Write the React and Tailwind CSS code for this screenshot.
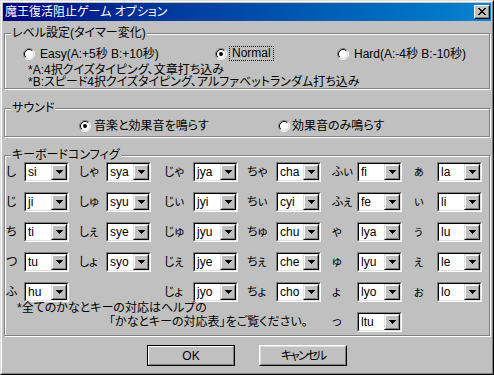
import React from "react";

const ROWS = [
  [["し", "si"], ["しゃ", "sya"], ["じゃ", "jya"], ["ちゃ", "cha"], ["ふぃ", "fi"], ["ぁ", "la"]],
  [["じ", "ji"], ["しゅ", "syu"], ["じぃ", "jyi"], ["ちぃ", "cyi"], ["ふぇ", "fe"], ["ぃ", "li"]],
  [["ち", "ti"], ["しぇ", "sye"], ["じゅ", "jyu"], ["ちゅ", "chu"], ["ゃ", "lya"], ["ぅ", "lu"]],
  [["つ", "tu"], ["しょ", "syo"], ["じぇ", "jye"], ["ちぇ", "che"], ["ゅ", "lyu"], ["ぇ", "le"]],
  [["ふ", "hu"], null, ["じょ", "jyo"], ["ちょ", "cho"], ["ょ", "lyo"], ["ぉ", "lo"]],
];
const CELL_W = ["w-[73px]", "w-[85px]", "w-[83px]", "w-[85px]", "w-[82px]", "w-[72px]"];
const LABEL_W = ["w-[18px]", "w-[27px]", "w-[29px]", "w-[29px]", "w-[25px]", "w-[23px]"];

function Radio({ checked }) {
  return (
    <svg width="12" height="12" viewBox="0 0 12 12" className="shrink-0 block">
      <circle cx="6" cy="6" r="4.5" fill="#fff" />
      <path d="M2.11 9.89A5.5 5.5 0 0 1 9.89 2.11" stroke="#808080" fill="none" />
      <path d="M9.89 2.11A5.5 5.5 0 0 1 2.11 9.89" stroke="#fff" fill="none" />
      <path d="M2.82 9.18A4.5 4.5 0 0 1 9.18 2.82" stroke="#000" fill="none" />
      <path d="M9.18 2.82A4.5 4.5 0 0 1 2.82 9.18" stroke="#dfdfdf" fill="none" />
      {checked && <circle cx="6" cy="6" r="2" fill="#000" />}
    </svg>
  );
}

function Arrow() {
  return (
    <svg width="7" height="4" viewBox="0 0 7 4" className="block">
      <rect x="0" y="0" width="7" height="1" fill="#000" />
      <rect x="1" y="1" width="5" height="1" fill="#000" />
      <rect x="2" y="2" width="3" height="1" fill="#000" />
      <rect x="3" y="3" width="1" height="1" fill="#000" />
    </svg>
  );
}

function Combo({ value }) {
  return (
    <div className="w-[45px] h-[20px] shrink-0 flex border border-t-[#808080] border-l-[#808080] border-b-white border-r-white">
      <div className="flex-1 flex border border-t-black border-l-black border-b-[#dfdfdf] border-r-[#dfdfdf] bg-white">
        <div className="flex-1 pl-[2px] leading-[16px] text-[12px] text-black">{value}</div>
        <div className="w-[16px] h-[16px] flex border border-t-[#dfdfdf] border-l-[#dfdfdf] border-b-black border-r-black">
          <div className="flex-1 flex items-center justify-center bg-[#c0c0c0] border border-t-white border-l-white border-b-[#808080] border-r-[#808080]">
            <Arrow />
          </div>
        </div>
      </div>
    </div>
  );
}

function Cell({ item, i }) {
  return (
    <div className={`${CELL_W[i]} h-[20px] flex items-center shrink-0`}>
      {item && (
        <>
          <div className={`${LABEL_W[i]} shrink-0 leading-[14px]`}>{item[0]}</div>
          <Combo value={item[1]} />
        </>
      )}
    </div>
  );
}

function Group({ title, className, children }) {
  return (
    <div
      className={`relative ml-[1px] w-[486px] border border-[#808080] shadow-[inset_1px_1px_0_#fff,1px_1px_0_#fff] ${className}`}
    >
      <span className="absolute left-[6px] top-[-7px] px-[1px] bg-[#c0c0c0] leading-[12px] whitespace-nowrap">
        {title}
      </span>
      {children}
    </div>
  );
}

function CloseX() {
  const r = (x, y, w) => <rect key={`${x}-${y}`} x={x} y={y} width={w} height="1" fill="#000" />;
  return (
    <svg width="8" height="7" viewBox="0 0 8 7" className="block">
      {r(0, 0, 2)}{r(6, 0, 2)}
      {r(1, 1, 2)}{r(5, 1, 2)}
      {r(2, 2, 4)}
      {r(3, 3, 2)}
      {r(2, 4, 4)}
      {r(1, 5, 2)}{r(5, 5, 2)}
      {r(0, 6, 2)}{r(6, 6, 2)}
    </svg>
  );
}

export default function App() {
  return (
    <div className="w-[494px] h-[375px] bg-[#c0c0c0] border border-t-[#dfdfdf] border-l-[#dfdfdf] border-b-black border-r-black font-['Liberation_Sans','Noto_Sans_CJK_JP',sans-serif] [font-feature-settings:'palt'] text-[12px] text-black">
      <div className="w-full h-full border border-t-white border-l-white border-b-[#808080] border-r-[#808080] p-[1px] flex flex-col">
        {/* title bar */}
        <div className="h-[18px] shrink-0 flex items-center justify-between pl-[2px] pr-[1px] bg-gradient-to-r from-[#000080] to-[#1084d0]">
          <span className="text-white leading-[14px] whitespace-nowrap">魔王復活阻止ゲーム オプション</span>
          <div className="w-[16px] h-[14px] flex border border-t-white border-l-white border-b-black border-r-black bg-[#c0c0c0]">
            <div className="flex-1 flex items-center justify-center border-b border-r border-b-[#808080] border-r-[#808080]">
              <CloseX />
            </div>
          </div>
        </div>

        {/* level */}
        <Group title="レベル設定(タイマー変化)" className="mt-[12px] h-[56px]">
          <div className="mt-[12px] h-[14px] pl-[18px] grid grid-cols-[192px_122px_1fr] items-center">
            <div className="flex items-center">
              <Radio />
              <span className="ml-[5px] leading-[14px] whitespace-nowrap">Easy(A:+5秒 B:+10秒)</span>
            </div>
            <div className="flex items-center">
              <Radio checked />
              <span className="ml-[2px] px-[2px] border border-dotted border-black leading-[13px] whitespace-nowrap">Normal</span>
            </div>
            <div className="flex items-center">
              <Radio />
              <span className="ml-[5px] leading-[14px] whitespace-nowrap">Hard(A:-4秒 B:-10秒)</span>
            </div>
          </div>
          <div className="mt-[4px] pl-[23px] leading-[12px] whitespace-nowrap">
            <div>*A:4択クイズタイピング、文章打ち込み</div>
            <div>*B:スピード4択クイズタイピング、アルファベットランダム打ち込み</div>
          </div>
        </Group>

        {/* sound */}
        <Group title="サウンド" className="mt-[19px] h-[29px]">
          <div className="mt-[10px] h-[14px] pl-[74px] grid grid-cols-[199px_1fr] items-center">
            <div className="flex items-center">
              <Radio checked />
              <span className="ml-[3px] leading-[14px] whitespace-nowrap">音楽と効果音を鳴らす</span>
            </div>
            <div className="flex items-center">
              <Radio />
              <span className="ml-[2px] leading-[14px] whitespace-nowrap">効果音のみ鳴らす</span>
            </div>
          </div>
        </Group>

        {/* keyboard */}
        <Group title="キーボードコンフィグ" className="mt-[18px] h-[181px]">
          <div className="pt-[6px] pl-[1px] flex flex-col gap-[10px]">
            {ROWS.map((row, r) => (
              <div key={r} className="flex">
                {row.map((item, i) => (
                  <Cell key={i} item={item} i={i} />
                ))}
              </div>
            ))}
          </div>
          <div className="pl-[1px] flex">
            <div className="w-[326px] shrink-0 whitespace-nowrap leading-[12px]">
              <div className="pl-[11px]">*全てのかなとキーの対応はヘルプの</div>
              <div className="mt-[2px] pl-[103px]">「かなとキーの対応表」をご覧ください。</div>
            </div>
            <div className="mt-[10px]">
              <Cell item={["っ", "ltu"]} i={4} />
            </div>
          </div>
        </Group>

        {/* buttons */}
        <div className="mt-[9px] flex justify-center gap-[24px]">
          <div className="w-[88px] h-[21px] flex border border-black">
            <div className="flex-1 flex items-center justify-center border border-t-white border-l-white border-b-[#808080] border-r-[#808080] leading-[14px]">
              OK
            </div>
          </div>
          <div className="w-[88px] h-[21px] flex border border-t-white border-l-white border-b-black border-r-black">
            <div className="flex-1 flex items-center justify-center border border-t-[#dfdfdf] border-l-[#dfdfdf] border-b-[#808080] border-r-[#808080] leading-[14px] tracking-[-2px]">
              キャンセル
            </div>
          </div>
        </div>
      </div>
    </div>
  );
}
